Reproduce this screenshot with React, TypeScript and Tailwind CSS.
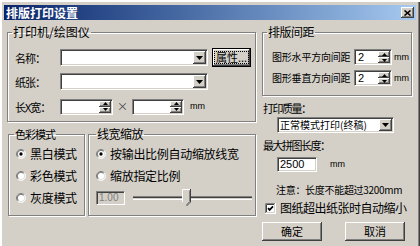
import React from "react"

const raised =
  "bg-[#d4d0c8] shadow-[inset_-1px_-1px_0_#404040,inset_1px_1px_0_#ffffff,inset_-2px_-2px_0_#808080,inset_2px_2px_0_#d4d0c8]"
const sunken =
  "border border-t-[#808080] border-l-[#808080] border-r-white border-b-white shadow-[inset_1px_1px_0_#404040,inset_-1px_-1px_0_#d4d0c8]"
const etched = "border border-[#808080] shadow-[inset_1px_1px_0_#ffffff,1px_1px_0_#ffffff]"

function Tri({ up }: { up?: boolean }) {
  return (
    <svg width="5" height="3" viewBox="0 0 5 3">
      <path d={up ? "M2.5 0L5 3H0z" : "M0 0h5L2.5 3z"} fill="#000" />
    </svg>
  )
}

function Combo({ className, text }: { className: string; text?: string }) {
  return (
    <div className={"flex bg-white " + sunken + " " + className}>
      <span className="self-center pl-[2px] text-[10px] leading-none">{text}</span>
      <div className={"my-[1px] mr-[1px] ml-auto flex w-[13px] items-center justify-center " + raised}>
        <svg width="7" height="4" viewBox="0 0 7 4">
          <path d="M0 0h7L3.5 4z" fill="#000" />
        </svg>
      </div>
    </div>
  )
}

function Spin({ className, value }: { className: string; value?: string }) {
  return (
    <div className={"flex bg-white " + sunken + " " + className}>
      <span className="self-center pl-[3px] font-['Liberation_Sans',sans-serif] text-[11px] leading-none">{value}</span>
      <div className="my-[1px] mr-[1px] ml-auto flex w-[12px] flex-col">
        <div className={"flex flex-1 items-center justify-center " + raised}>
          <Tri up />
        </div>
        <div className={"flex flex-1 items-center justify-center " + raised}>
          <Tri />
        </div>
      </div>
    </div>
  )
}

function Radio({ checked, label }: { checked?: boolean; label: string }) {
  return (
    <div className="flex h-[22px] items-center">
      <svg width="10" height="10" viewBox="0 0 12 12">
        <circle cx="6" cy="6" r="5.5" fill="#fff" />
        <path d="M2.1 9.9A5.5 5.5 0 0 1 9.9 2.1" stroke="#808080" fill="none" />
        <path d="M2.8 9.2A4.5 4.5 0 0 1 9.2 2.8" stroke="#404040" fill="none" />
        <path d="M9.9 2.1A5.5 5.5 0 0 1 2.1 9.9" stroke="#fff" fill="none" />
        <path d="M9.2 2.8A4.5 4.5 0 0 1 2.8 9.2" stroke="#d4d0c8" fill="none" />
        {checked && <circle cx="6" cy="6" r="2" fill="#000" />}
      </svg>
      <span className="ml-[4px] text-[12px] leading-[12px] tracking-[-0.3px]">{label}</span>
    </div>
  )
}

function Slider() {
  return (
    <div className="relative ml-[8px] h-[18px] w-[119px]">
      <div className="absolute top-[7px] right-0 left-0 h-[4px] border-t border-b border-t-[#808080] border-b-white shadow-[inset_0_1px_0_#404040]" />
      <svg className="absolute top-0 left-[49px]" width="9" height="18" viewBox="0 0 9 18">
        <path d="M0.5 0.5H8.5V13L4.5 17L0.5 13Z" fill="#d4d0c8" />
        <path d="M0.5 13V0.5H8" stroke="#fff" fill="none" />
        <path d="M8.5 0V13L4.5 17" stroke="#404040" fill="none" />
        <path d="M7.5 1.5V12.6L4.5 15.6" stroke="#808080" fill="none" />
      </svg>
    </div>
  )
}

function Button({ label }: { label: string }) {
  return (
    <div className={"flex h-[19px] w-[60px] items-center justify-center text-[11px] leading-[11px] " + raised}>
      {label}
    </div>
  )
}

export default function App() {
  return (
    <div className="h-[246px] w-[420px] overflow-hidden bg-[#d4d0c8] px-[4px] pt-[5px] font-['Noto_Sans_CJK_SC',sans-serif] text-black shadow-[inset_2px_2px_0_#ffffff,inset_-1px_0_0_#404040,inset_-2px_0_0_#808080]">
      {/* title bar */}
      <div className="flex h-[15px] items-center bg-linear-to-r from-[#0a246a] to-[#a6caf0] pl-[2px]">
        <span className="text-[12px] leading-[12px] font-bold text-white">排版打印设置</span>
        <div className={"mr-[2px] ml-auto flex h-[11px] w-[13px] items-center justify-center " + raised}>
          <svg width="7" height="6" viewBox="0 0 7 6">
            <path d="M0.5 0.5L6.5 5.5M6.5 0.5L0.5 5.5" stroke="#000" strokeWidth="1.6" />
          </svg>
        </div>
      </div>

      <div className="flex pt-[6px] pl-[3px]">
        {/* left column */}
        <div className="flex w-[249px] flex-col">
          <fieldset className={"h-[96px] " + etched}>
            <legend className="ml-[4px] px-[1px] text-[12px] leading-[12px]">打印机/绘图仪</legend>
            <div className="mt-[10px] flex h-[19px] items-center pl-[7px]">
              <span className="w-[45px] text-[11px] leading-[12px] tracking-[-1px]">名称：</span>
              <Combo className="h-[17px] w-[148px]" />
              <div className="ml-[4px] h-[19px] w-[39px] border border-black">
                <div className={"flex h-full items-center justify-center " + raised}>
                  <span className="border border-dotted border-black px-[1px] text-[11px] leading-[11px]">属性...</span>
                </div>
              </div>
            </div>
            <div className="mt-[5px] flex h-[19px] items-center pl-[7px]">
              <span className="w-[45px] text-[11px] leading-[12px] tracking-[-1px]">纸张：</span>
              <Combo className="h-[17px] w-[148px]" />
            </div>
            <div className="mt-[6px] flex h-[19px] items-center pl-[7px]">
              <span className="w-[45px] text-[11px] leading-[12px] tracking-[-1px]">长X宽：</span>
              <Spin className="h-[16px] w-[53px]" />
              <span className="w-[19px] text-center text-[11px] leading-[11px] text-[#444]">×</span>
              <Spin className="h-[16px] w-[52px]" />
              <span className="ml-[6px] font-['Liberation_Sans',sans-serif] text-[9px] leading-[9px]">mm</span>
            </div>
          </fieldset>

          <div className="mt-[6px] flex gap-[3px] pl-[1px]">
            <fieldset className={"h-[88px] w-[77px] " + etched}>
              <legend className="ml-[5px] px-[1px] text-[11px] leading-[12px] tracking-[-1px]">色彩模式</legend>
              <div className="mt-[3px] pl-[7px]">
                <Radio checked label="黑白模式" />
                <Radio label="彩色模式" />
                <Radio label="灰度模式" />
              </div>
            </fieldset>
            <fieldset className={"h-[88px] w-[168px] " + etched}>
              <legend className="ml-[7px] px-[1px] text-[12px] leading-[12px] tracking-[-0.5px]">线宽缩放</legend>
              <div className="mt-[3px] pl-[7px]">
                <Radio checked label="按输出比例自动缩放线宽" />
                <Radio label="缩放指定比例" />
                <div className="flex h-[22px] items-center">
                  <div className={"flex h-[14px] w-[29px] items-center bg-[#d4d0c8] pl-[2px] font-['Liberation_Sans',sans-serif] text-[10px] leading-none text-[#808080] " + sunken}>
                    1.00
                  </div>
                  <Slider />
                </div>
              </div>
            </fieldset>
          </div>
        </div>

        {/* right column */}
        <div className="ml-[6px] flex w-[150px] flex-col">
          <fieldset className={"h-[70px] " + etched}>
            <legend className="ml-[4px] px-[1px] text-[12px] leading-[12px] tracking-[-0.5px]">排版间距</legend>
            <div className="mt-[10px] flex h-[18px] items-center pl-[9px]">
              <span className="w-[82px] text-[10px] leading-[12px] tracking-[-0.2px]">图形水平方向间距</span>
              <Spin className="h-[16px] w-[38px]" value="2" />
              <span className="ml-[2px] font-['Liberation_Sans',sans-serif] text-[9px] leading-[9px]">mm</span>
            </div>
            <div className="mt-[3px] flex h-[18px] items-center pl-[9px]">
              <span className="w-[82px] text-[10px] leading-[12px] tracking-[-0.2px]">图形垂直方向间距</span>
              <Spin className="h-[16px] w-[38px]" value="2" />
              <span className="ml-[2px] font-['Liberation_Sans',sans-serif] text-[9px] leading-[9px]">mm</span>
            </div>
          </fieldset>

          <div className="mt-[6px] ml-[1px] text-[11px] leading-[12px] tracking-[-1.5px]">打印质量：</div>
          <Combo className="mt-[3px] ml-[15px] h-[16px] w-[117px]" text="正常模式打印(终稿)" />

          <div className="mt-[6px] ml-[1px] text-[11px] leading-[12px] tracking-[-1.5px]">最大拼图长度：</div>
          <div className="mt-[6px] ml-[15px] flex items-center">
            <div className={"flex h-[15px] w-[40px] items-center bg-white pl-[2px] font-['Liberation_Sans',sans-serif] text-[11px] leading-none " + sunken}>
              2500
            </div>
            <span className="ml-[13px] font-['Liberation_Sans',sans-serif] text-[9px] leading-[9px]">mm</span>
          </div>

          <div className="mt-[12px] ml-[14px] text-[10px] leading-[12px] tracking-[-0.3px]">注意：长度不能超过3200mm</div>

          <div className="mt-[6px] ml-[3px] flex items-center">
            <svg width="11" height="11" viewBox="0 0 11 11">
              <rect width="11" height="11" fill="#fff" />
              <path d="M0.5 10V0.5H10" stroke="#808080" fill="none" />
              <path d="M1.5 9V1.5H9" stroke="#404040" fill="none" />
              <path d="M0 10.5H10.5V0" stroke="#fff" fill="none" />
              <path d="M1 9.5H9.5V1" stroke="#d4d0c8" fill="none" />
              <path d="M3 5.2L4.6 6.9L8 3.3" stroke="#000" strokeWidth="1.7" fill="none" />
            </svg>
            <span className="ml-[4px] text-[12px] leading-[12px] tracking-[-0.5px]">图纸超出纸张时自动缩小</span>
          </div>

          <div className="mt-[8px] flex gap-[23px]">
            <Button label="确定" />
            <Button label="取消" />
          </div>
        </div>
      </div>
    </div>
  )
}
